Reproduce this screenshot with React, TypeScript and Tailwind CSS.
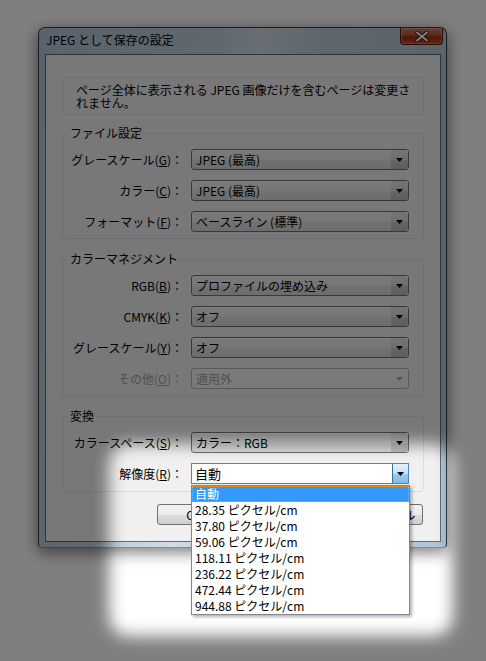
import React from 'react'

type ComboProps = {
  value: string
  disabled?: boolean
  focused?: boolean
}

function Arrow({ color }: { color: string }) {
  return (
    <svg width="7" height="4" viewBox="0 0 7 4">
      <path d="M0 0h7L3.5 4z" fill={color} />
    </svg>
  )
}

function Combo({ value, disabled, focused }: ComboProps) {
  if (focused) {
    return (
      <div className="flex h-[21px] items-stretch border border-[#4f86b8] bg-white">
        <span className="flex-1 pl-[3px] text-[13px] leading-[19px] text-black">{value}</span>
        <span className="flex w-[16px] items-center justify-center border-l border-[#3c6f9e] bg-[linear-gradient(180deg,#e4f2fb_0%,#c4e3f6_50%,#98cdef_51%,#7fbde6_100%)]">
          <Arrow color="#000" />
        </span>
      </div>
    )
  }
  if (disabled) {
    return (
      <div className="flex h-[21px] items-stretch rounded-[3px] border border-[#afb5ba] bg-[#f4f4f4]">
        <span className="flex-1 pl-[4px] text-[12px] leading-[19px] text-[#a0a0a0]">{value}</span>
        <span className="flex w-[17px] items-center justify-center">
          <Arrow color="#a8a8a8" />
        </span>
      </div>
    )
  }
  return (
    <div className="flex h-[21px] items-stretch rounded-[3px] border border-[#707070] bg-[linear-gradient(180deg,#f4f4f4_0%,#ececec_50%,#e2e2e2_51%,#dadada_100%)] shadow-[inset_0_1px_0_#fff]">
      <span className="flex-1 pl-[4px] text-[12px] leading-[19px] text-black">{value}</span>
      <span className="flex w-[17px] items-center justify-center bg-[linear-gradient(180deg,#e8e8e8_0%,#dedede_50%,#c9c9c9_51%,#bdbdbd_100%)]">
        <Arrow color="#000" />
      </span>
    </div>
  )
}

function Label({ text, keyChar, disabled }: { text: string; keyChar: string; disabled?: boolean }) {
  return (
    <span className={disabled ? 'w-[120px] text-right text-[12px] leading-[16px] text-[#a0a0a0]' : 'w-[120px] text-right text-[12px] leading-[16px] text-black'}>
      {text}(<span className="underline">{keyChar}</span>)：
    </span>
  )
}

const RESOLUTIONS = [
  '28.35 ピクセル/cm',
  '37.80 ピクセル/cm',
  '59.06 ピクセル/cm',
  '118.11 ピクセル/cm',
  '236.22 ピクセル/cm',
  '472.44 ピクセル/cm',
  '944.88 ピクセル/cm',
]

function CloseButton() {
  return (
    <div className="flex h-[17px] w-[43px] items-center justify-center rounded-b-[4px] border border-t-0 border-[#4a1a10] bg-[linear-gradient(180deg,#c9826f_0%,#b8533d_45%,#a12a14_55%,#c8482a_100%)] shadow-[inset_0_0_0_1px_rgba(255,200,185,0.35)]">
      <svg width="14" height="11" viewBox="0 0 14 11">
        <path d="M2 1.5l10 8M12 1.5l-10 8" stroke="#3a1a14" strokeWidth="3.6" strokeLinecap="round" />
        <path d="M2 1.5l10 8M12 1.5l-10 8" stroke="#fff" strokeWidth="2" strokeLinecap="round" />
      </svg>
    </div>
  )
}

export default function App() {
  return (
    <div className="relative h-[661px] w-[486px] overflow-hidden bg-white pl-[38px] pt-[27px] font-['Noto_Sans_CJK_JP','Noto_Sans',sans-serif]">
      {/* window */}
      <div className="flex h-[521px] w-[409px] flex-col rounded-t-[7px] rounded-b-[4px] border border-[#2f3b47] border-b-[#3aa6d8] bg-[linear-gradient(100deg,#b4c6d7_0%,#bfd0de_35%,#d0dde8_45%,#bccdda_58%,#b2c5d6_100%)] shadow-[0_4px_16px_rgba(0,0,0,0.55)]">
        <div className="flex h-[26px] items-start justify-between pl-[7px] pr-[3px]">
          <span className="mt-[4px] text-[12px] leading-[16px] text-black">JPEG として保存の設定</span>
          <CloseButton />
        </div>

        <div className="mb-[5px] ml-[6px] mr-[5px] flex flex-1 flex-col border border-[#5d6b78] bg-[#f0f0f0] px-[16px] pt-[22px]">
          {/* notice */}
          <div className="rounded-[3px] border border-[#d5dfe5] pb-[5px] pl-[13px] pt-[5px] text-[12px] leading-[13px] text-black">
            ページ全体に表示される JPEG 画像だけを含むページは変更さ
            <br />
            れません。
          </div>

          {/* file settings */}
          <fieldset className="mt-[10px] rounded-[3px] border border-[#d5dfe5] pb-[6px] pt-[8px]">
            <legend className="ml-[5px] px-[2px] text-[12px] leading-[16px] text-black">ファイル設定</legend>
            <div className="flex flex-col gap-[10px]">
              <div className="flex items-center">
                <Label text="グレースケール" keyChar="G" />
                <div className="ml-[8px] w-[218px]"><Combo value="JPEG (最高)" /></div>
              </div>
              <div className="flex items-center">
                <Label text="カラー" keyChar="C" />
                <div className="ml-[8px] w-[218px]"><Combo value="JPEG (最高)" /></div>
              </div>
              <div className="flex items-center">
                <Label text="フォーマット" keyChar="F" />
                <div className="ml-[8px] w-[218px]"><Combo value="ベースライン (標準)" /></div>
              </div>
            </div>
          </fieldset>

          {/* color management */}
          <fieldset className="mt-[12px] rounded-[3px] border border-[#d5dfe5] pb-[7px] pt-[8px]">
            <legend className="ml-[5px] px-[2px] text-[12px] leading-[16px] text-black">カラーマネジメント</legend>
            <div className="flex flex-col gap-[10px]">
              <div className="flex items-center">
                <Label text="RGB" keyChar="B" />
                <div className="ml-[8px] w-[218px]"><Combo value="プロファイルの埋め込み" /></div>
              </div>
              <div className="flex items-center">
                <Label text="CMYK" keyChar="K" />
                <div className="ml-[8px] w-[218px]"><Combo value="オフ" /></div>
              </div>
              <div className="flex items-center">
                <Label text="グレースケール" keyChar="Y" />
                <div className="ml-[8px] w-[218px]"><Combo value="オフ" /></div>
              </div>
              <div className="flex items-center">
                <Label text="その他" keyChar="O" disabled />
                <div className="ml-[8px] w-[218px]"><Combo value="適用外" disabled /></div>
              </div>
            </div>
          </fieldset>

          {/* conversion */}
          <fieldset className="mt-[11px] rounded-[3px] border border-[#d5dfe5] pb-[7px] pt-[8px]">
            <legend className="ml-[5px] px-[2px] text-[12px] leading-[16px] text-black">変換</legend>
            <div className="flex flex-col gap-[10px]">
              <div className="flex items-center">
                <Label text="カラースペース" keyChar="S" />
                <div className="ml-[8px] w-[218px]"><Combo value="カラー：RGB" /></div>
              </div>
              <div className="flex items-center">
                <Label text="解像度" keyChar="R" />
                <div className="relative ml-[8px] w-[218px]">
                  <Combo value="自動" focused />
                  {/* open dropdown list */}
                  <ul className="absolute left-0 top-[22px] z-10 w-[219px] border border-[#828790] bg-white shadow-[2px_2px_3px_rgba(0,0,0,0.3)]">
                    <li className="h-[16px] bg-[#3399ff] pl-[3px] text-[12px] leading-[16px] text-white outline-1 -outline-offset-1 outline-dotted outline-[#f0a030]">自動</li>
                    {RESOLUTIONS.map(r => (
                      <li key={r} className="h-[16px] pl-[3px] text-[12px] leading-[16px] text-black">{r}</li>
                    ))}
                  </ul>
                </div>
              </div>
            </div>
          </fieldset>

          {/* buttons */}
          <div className="mt-[12px] flex justify-between pl-[95px] pr-[1px]">
            <button className="h-[21px] w-[75px] rounded-[3px] border border-[#707070] bg-[linear-gradient(180deg,#f2f2f2_0%,#ebebeb_50%,#dddddd_51%,#cfcfcf_100%)] text-[12px] leading-[19px] text-black">OK</button>
            <button className="h-[21px] w-[75px] rounded-[3px] border border-[#707070] bg-[linear-gradient(180deg,#f2f2f2_0%,#ebebeb_50%,#dddddd_51%,#cfcfcf_100%)] text-[12px] leading-[19px] text-black">キャンセル</button>
          </div>
        </div>
      </div>

      {/* spotlight dimming */}
      <div className="pointer-events-none absolute inset-0 z-20 overflow-hidden">
        <div className="absolute left-[109px] top-[444px] h-[192px] w-[344px] rounded-[20px] shadow-[0_0_0_1200px_rgba(0,0,0,0.5)] blur-[8px]" />
      </div>
    </div>
  )
}
